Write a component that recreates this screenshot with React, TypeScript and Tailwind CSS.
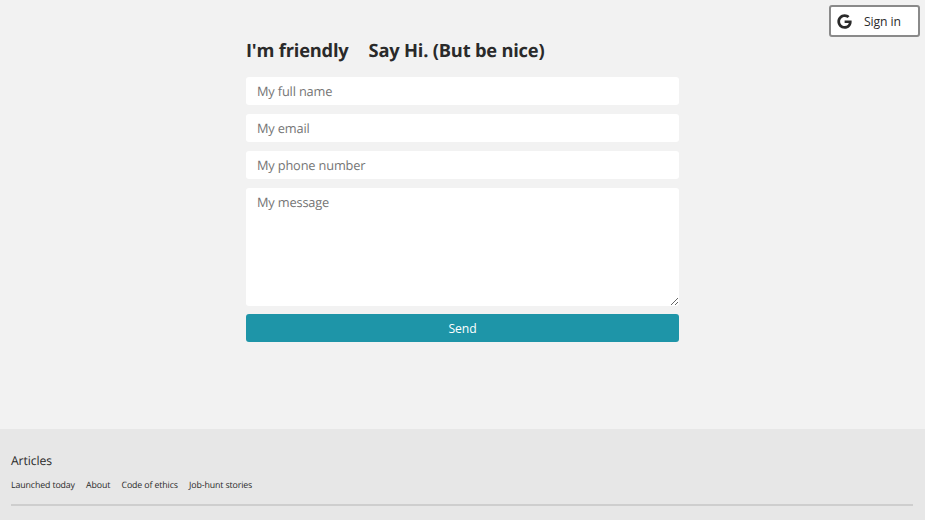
import { FaGoogle } from "react-icons/fa";

const fields = ["My full name", "My email", "My phone number"];
const links = ["Launched today", "About", "Code of ethics", "Job-hunt stories"];

export default function App() {
  return (
    <div className="flex h-[520px] w-[925px] flex-col overflow-hidden bg-[#f2f2f2] font-['Open_Sans',sans-serif] text-[#2a2a2a] [text-rendering:geometricPrecision]">
      <header className="flex h-[37px] shrink-0 justify-end pt-[5px] pr-[5px]">
        <button className="flex h-8 w-[91px] items-center rounded-[3px] border-2 border-[#8a8a8a] bg-white pl-[6px] text-[12.2px] tracking-[-0.1px]">
          <FaGoogle className="mr-3 size-[15px]" />
          <span className="pt-[2px]">Sign in</span>
        </button>
      </header>
      <main className="mx-auto flex w-[433px] grow flex-col">
        <h1 className="flex h-[40px] gap-5 text-[18.3px] leading-[27px] font-bold tracking-[-0.2px] whitespace-nowrap">
          <span>I'm friendly</span>
          <span>Say Hi. (But be nice)</span>
        </h1>
        <form className="flex flex-col">
          {fields.map((label) => (
            <input key={label} placeholder={label} className="mb-[9px] h-[28px] rounded-[3px] bg-white px-[11px] text-[12.8px] tracking-[-0.16px] [text-rendering:geometricPrecision] placeholder:text-[#757575]" />
          ))}
          <textarea placeholder="My message" className="mb-[8px] h-[118px] resize-y rounded-[3px] bg-white px-[11px] py-[5px] text-[12.8px] leading-[18px] tracking-[-0.16px] [text-rendering:geometricPrecision] placeholder:text-[#757575]" />
          <button className="h-[28px] rounded-[3px] bg-[#1e95a8] pt-[2px] text-[12.2px] tracking-[-0.1px] text-white">Send</button>
        </form>
      </main>
      <footer className="h-[91px] shrink-0 bg-[#e7e7e7] px-[11px] pt-[23px]">
        <h2 className="text-[12.2px] leading-[18px] tracking-[-0.1px]">Articles</h2>
        <nav className="mt-[7px] mr-px flex h-[29px] gap-[11.2px] border-b-2 border-[#cecece] text-[8.8px] leading-[16px] tracking-[-0.12px]">
          {links.map((link) => <a key={link}>{link}</a>)}
        </nav>
      </footer>
    </div>
  );
}
